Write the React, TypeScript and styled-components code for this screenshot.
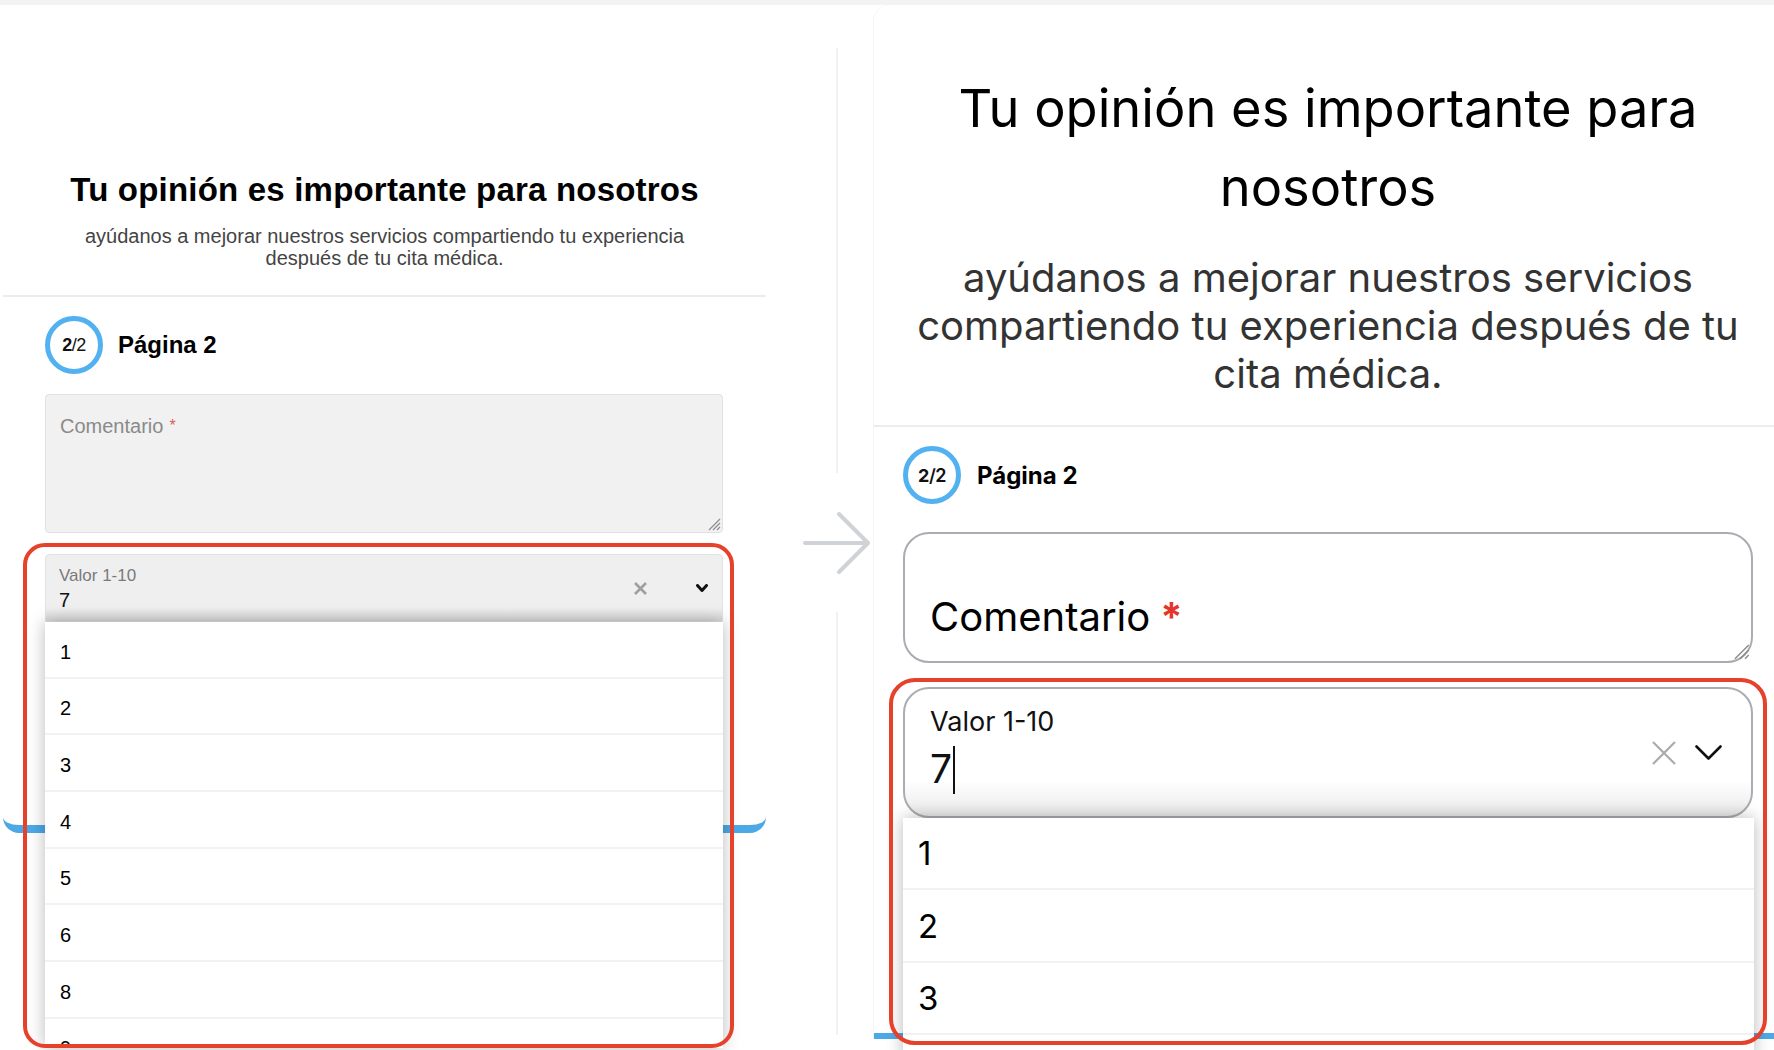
import styled, { createGlobalStyle } from 'styled-components';

const GlobalStyle = createGlobalStyle`
  body {
    margin: 0;
    background: #fff;
    overflow: hidden;
  }
  * {
    box-sizing: border-box;
  }
`;

type Lg = { $lg?: boolean };

const leftItems = ['1', '2', '3', '4', '5', '6', '8', '9', '10'];
const rightItems = ['1', '2', '3', '4', '5'];

const CloseIcon = ({ lg }: { lg?: boolean }) => {
  const s = lg ? 24 : 13;
  return (
    <svg width={s} height={s} viewBox={`0 0 ${s} ${s}`}>
      <path
        d={`M1 1L${s - 1} ${s - 1}M${s - 1} 1L1 ${s - 1}`}
        stroke={lg ? '#ababab' : '#9f9f9f'}
        strokeWidth={lg ? 2.2 : 2.6}
        fill="none"
      />
    </svg>
  );
};

const ChevronIcon = ({ lg }: { lg?: boolean }) => {
  const w = lg ? 27 : 12;
  const h = lg ? 15 : 8;
  return (
    <svg width={w} height={h} viewBox={`0 0 ${w} ${h}`}>
      <polyline
        points={`1.5,1.5 ${w / 2},${h - 1.5} ${w - 1.5},1.5`}
        stroke="#111"
        strokeWidth={lg ? 2.6 : 3}
        fill="none"
        strokeLinecap="round"
        strokeLinejoin="round"
      />
    </svg>
  );
};

const Grip = ({ lg }: { lg?: boolean }) => {
  const s = lg ? 20 : 16;
  return (
    <svg width={s} height={s} viewBox="0 0 16 16">
      <path d="M15 4L4 15M15 8L8 15M15 12L12 15" stroke="#8d8d8d" strokeWidth="1.2" />
    </svg>
  );
};

const ArrowIcon = () => (
  <svg width="70" height="64" viewBox="0 0 70 64">
    <path
      d="M3 32H66M37 3L66 32L37 61"
      stroke="#cfd2d6"
      strokeWidth="4"
      fill="none"
      strokeLinecap="round"
      strokeLinejoin="round"
    />
  </svg>
);

const SurveyForm = ({ lg, items }: { lg?: boolean; items: string[] }) => (
  <>
    <Heading $lg={lg}>
      Tu opinión es importante para{lg ? <br /> : ' '}nosotros
    </Heading>
    <Subtitle $lg={lg}>
      {lg ? (
        <>
          ayúdanos a mejorar nuestros servicios
          <br />
          compartiendo tu experiencia después de tu
          <br />
          cita médica.
        </>
      ) : (
        <>
          ayúdanos a mejorar nuestros servicios compartiendo tu experiencia
          <br />
          después de tu cita médica.
        </>
      )}
    </Subtitle>
    <Divider $lg={lg} />
    <StepRow $lg={lg}>
      <StepCircle $lg={lg}>
        <b>2</b>/2
      </StepCircle>
      <StepTitle $lg={lg}>Página 2</StepTitle>
    </StepRow>
    <Fields $lg={lg}>
      <TextBox $lg={lg}>
        <Placeholder $lg={lg}>
          Comentario<Required $lg={lg}>*</Required>
        </Placeholder>
        <GripCorner>
          <Grip lg={lg} />
        </GripCorner>
      </TextBox>
      <SelectWrap $lg={lg}>
        <SelectBox $lg={lg}>
          <ValueCol $lg={lg}>
            <SelectLabel $lg={lg}>Valor 1-10</SelectLabel>
            <SelectValue $lg={lg}>
              7{lg && <Caret />}
            </SelectValue>
          </ValueCol>
          <Icons $lg={lg}>
            <CloseIcon lg={lg} />
            <ChevronIcon lg={lg} />
          </Icons>
        </SelectBox>
        <Menu $lg={lg}>
          {items.map((item) => (
            <MenuItem key={item} $lg={lg}>
              {item}
            </MenuItem>
          ))}
        </Menu>
        <Highlight $lg={lg} />
      </SelectWrap>
    </Fields>
  </>
);

export default function App() {
  return (
    <Page>
      <GlobalStyle />
      <TopStrip />
      <Columns>
        <LeftCard>
          <SurveyForm items={leftItems} />
        </LeftCard>
        <Middle>
          <Rule $h={425} />
          <ArrowBox>
            <ArrowIcon />
          </ArrowBox>
          <Rule $h={423} />
        </Middle>
        <RightCard>
          <SurveyForm lg items={rightItems} />
        </RightCard>
      </Columns>
    </Page>
  );
}

const Page = styled.div`
  width: 1774px;
  height: 1050px;
  overflow: hidden;
  display: flex;
  flex-direction: column;
  background: #fff;
`;

const TopStrip = styled.div`
  flex: none;
  height: 5px;
  background: #f3f3f3;
`;

const Columns = styled.div`
  display: flex;
  align-items: flex-start;
`;

const LeftCard = styled.div`
  flex: none;
  margin-left: 3px;
  width: 763px;
  height: 828px;
  border-bottom: 8px solid #4ca9e8;
  border-radius: 0 0 16px 16px;
  font-family: 'Liberation Sans', Arial, sans-serif;
`;

const RightCard = styled.div`
  flex: none;
  width: 908px;
  height: 1034px;
  border-bottom: 6px solid #4ca9e8;
  border-top-left-radius: 16px;
  box-shadow: -1px 0 0 #f4f4f4;
  font-family: Inter, 'Noto Sans', sans-serif;
`;

const Middle = styled.div`
  flex: none;
  width: 108px;
  padding: 43px 0 0 34px;
  display: flex;
  flex-direction: column;
  align-items: center;
`;

const Rule = styled.div<{ $h: number }>`
  width: 2px;
  height: ${(p) => p.$h}px;
  background: #f1f1f1;
`;

const ArrowBox = styled.div`
  height: 139px;
  display: flex;
  align-items: center;
  justify-content: center;
`;

const Heading = styled.h1<Lg>`
  margin: ${(p) => (p.$lg ? '64px' : '166px')} 0 0;
  padding: 0 30px;
  text-align: center;
  color: #000;
  font-size: ${(p) => (p.$lg ? '52.4px' : '33px')};
  line-height: ${(p) => (p.$lg ? '79px' : '38px')};
  font-weight: ${(p) => (p.$lg ? 400 : 700)};
  letter-spacing: ${(p) => (p.$lg ? '0' : '0.2px')};
  white-space: nowrap;
`;

const Subtitle = styled.p<Lg>`
  margin: ${(p) => (p.$lg ? '27px' : '16px')} 0 0;
  text-align: center;
  color: ${(p) => (p.$lg ? '#333' : '#444')};
  font-size: ${(p) => (p.$lg ? '40px' : '20px')};
  line-height: ${(p) => (p.$lg ? '48px' : '22px')};
  white-space: nowrap;
`;

const Divider = styled.div<Lg>`
  margin-top: ${(p) => (p.$lg ? '27px' : '26px')};
  height: 2px;
  background: #ececec;
`;

const StepRow = styled.div<Lg>`
  margin-top: 19px;
  padding-left: ${(p) => (p.$lg ? '29px' : '42px')};
  display: flex;
  align-items: center;
  gap: ${(p) => (p.$lg ? '16px' : '15px')};
`;

const StepCircle = styled.div<Lg>`
  width: 58px;
  height: 58px;
  border-radius: 50%;
  border: 5px solid #52b1f0;
  display: flex;
  align-items: center;
  justify-content: center;
  color: #111;
  font-size: 18px;
  font-weight: ${(p) => (p.$lg ? 600 : 400)};
  letter-spacing: -0.5px;

  b {
    font-weight: 700;
  }
`;

const StepTitle = styled.div<Lg>`
  font-size: 24px;
  font-weight: 700;
  color: #000;
`;

const Fields = styled.div<Lg>`
  padding: ${(p) => (p.$lg ? '0 29px' : '0 43px 0 42px')};
`;

const TextBox = styled.div<Lg>`
  position: relative;
  margin-top: ${(p) => (p.$lg ? '28px' : '20px')};
  height: ${(p) => (p.$lg ? '131px' : '139px')};
  background: ${(p) => (p.$lg ? '#fff' : '#f1f1f1')};
  border: ${(p) => (p.$lg ? '2px solid #a9acb1' : '1px solid #e1e1e1')};
  border-radius: ${(p) => (p.$lg ? '26px' : '4px')};
  padding: ${(p) => (p.$lg ? '59px 25px 0' : '19px 14px 0')};
`;

const Placeholder = styled.div<Lg>`
  font-size: ${(p) => (p.$lg ? '40px' : '20px')};
  line-height: ${(p) => (p.$lg ? '48px' : '24px')};
  color: ${(p) => (p.$lg ? '#000' : '#8a8a8a')};
`;

const Required = styled.span<Lg>`
  margin-left: ${(p) => (p.$lg ? '10px' : '6px')};
  color: ${(p) => (p.$lg ? '#e5352b' : '#e35a5a')};
  font-weight: ${(p) => (p.$lg ? 700 : 400)};
  font-size: ${(p) => (p.$lg ? '40px' : '16px')};
  vertical-align: ${(p) => (p.$lg ? 'baseline' : 'top')};
`;

const GripCorner = styled.div`
  position: absolute;
  right: 1px;
  bottom: 1px;
  display: flex;
`;

const SelectWrap = styled.div<Lg>`
  position: relative;
  margin-top: ${(p) => (p.$lg ? '24px' : '21px')};
`;

const SelectBox = styled.div<Lg>`
  height: ${(p) => (p.$lg ? '131px' : '68px')};
  display: flex;
  align-items: center;
  border: ${(p) => (p.$lg ? '2px solid #a9acb1' : '1px solid #e2e2e2')};
  border-radius: ${(p) => (p.$lg ? '26px' : '4px 4px 0 0')};
  background: ${(p) =>
    p.$lg
      ? 'linear-gradient(to bottom, #fff 0%, #fff 72%, #e9e9e9 100%)'
      : 'linear-gradient(to bottom, #efefef 0%, #efefef 80%, #d8d8d8 100%)'};
  padding-left: ${(p) => (p.$lg ? '25px' : '13px')};
`;

const ValueCol = styled.div<Lg>`
  flex: 1;
  align-self: flex-start;
  padding-top: ${(p) => (p.$lg ? '17px' : '12px')};
`;

const SelectLabel = styled.div<Lg>`
  font-size: ${(p) => (p.$lg ? '27px' : '17px')};
  line-height: ${(p) => (p.$lg ? '32px' : '18px')};
  color: ${(p) => (p.$lg ? '#111' : '#7a7a7a')};
`;

const SelectValue = styled.div<Lg>`
  margin-top: ${(p) => (p.$lg ? '8px' : '3px')};
  font-size: ${(p) => (p.$lg ? '39px' : '20px')};
  line-height: ${(p) => (p.$lg ? '46px' : '24px')};
  color: #111;
`;

const Caret = styled.span`
  display: inline-block;
  width: 2px;
  height: 48px;
  margin-left: 1px;
  vertical-align: top;
  background: #111;
`;

const Icons = styled.div<Lg>`
  display: flex;
  align-items: center;
  gap: ${(p) => (p.$lg ? '19px' : '49px')};
  padding-right: ${(p) => (p.$lg ? '29px' : '14px')};
`;

const Menu = styled.div<Lg>`
  position: absolute;
  top: 100%;
  left: 0;
  right: ${(p) => (p.$lg ? '-1px' : '0')};
  height: ${(p) => (p.$lg ? '240px' : '426px')};
  overflow: hidden;
  background: #fff;
  box-shadow: 0 0 16px rgba(0, 0, 0, 0.28);
  z-index: 2;
`;

const MenuItem = styled.div<Lg>`
  height: ${(p) => (p.$lg ? '72.4px' : '56.67px')};
  display: flex;
  align-items: center;
  padding: ${(p) => (p.$lg ? '0 0 0 15px' : '6px 0 0 15px')};
  border-bottom: 2px solid #f2f2f2;
  font-size: ${(p) => (p.$lg ? '33px' : '20px')};
  color: #000;
`;

const Highlight = styled.div<Lg>`
  position: absolute;
  left: ${(p) => (p.$lg ? '-14px' : '-22px')};
  right: ${(p) => (p.$lg ? '-14px' : '-11px')};
  top: ${(p) => (p.$lg ? '-9px' : '-11px')};
  height: ${(p) => (p.$lg ? '367px' : '505px')};
  border: ${(p) => (p.$lg ? '4.5px' : '4px')} solid #e6412b;
  border-radius: ${(p) => (p.$lg ? '26px' : '22px')};
  pointer-events: none;
  z-index: 3;
`;
